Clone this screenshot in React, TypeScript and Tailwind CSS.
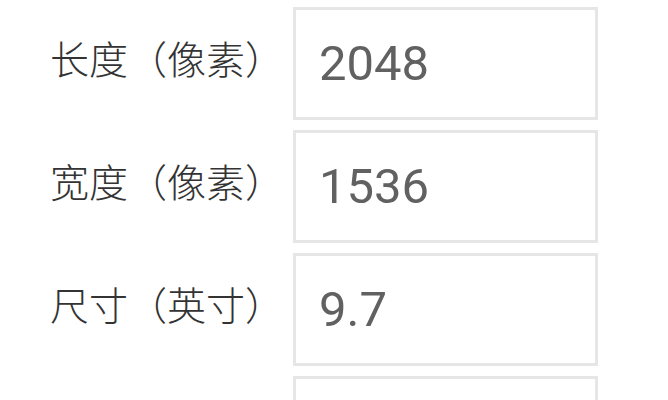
const rows = [
  { label: "长度（像素）", value: "2048" },
  { label: "宽度（像素）", value: "1536" },
  { label: "尺寸（英寸）", value: "9.7" },
  { label: "", value: "" },
];

export default function App() {
  return (
    <div className="h-[400px] w-[668px] overflow-hidden bg-white">
      <div className="flex flex-col gap-[10px] pt-[7px]">
        {rows.map((row, i) => (
          <div key={i} className="flex items-center">
            <div
              className="w-[293px] shrink-0 whitespace-nowrap pb-[12px] pl-[50px] text-[39px] font-light leading-none text-[#333333]"
              style={{ fontFamily: '"Noto Sans CJK SC", sans-serif' }}
            >
              {row.label}
            </div>
            <div
              className="flex h-[113px] w-[305px] shrink-0 items-center border-[3px] border-[#e6e6e6] pl-[23px] text-[49px] text-[#616161]"
              style={{ fontFamily: "Roboto, sans-serif" }}
            >
              {row.value}
            </div>
          </div>
        ))}
      </div>
    </div>
  );
}
